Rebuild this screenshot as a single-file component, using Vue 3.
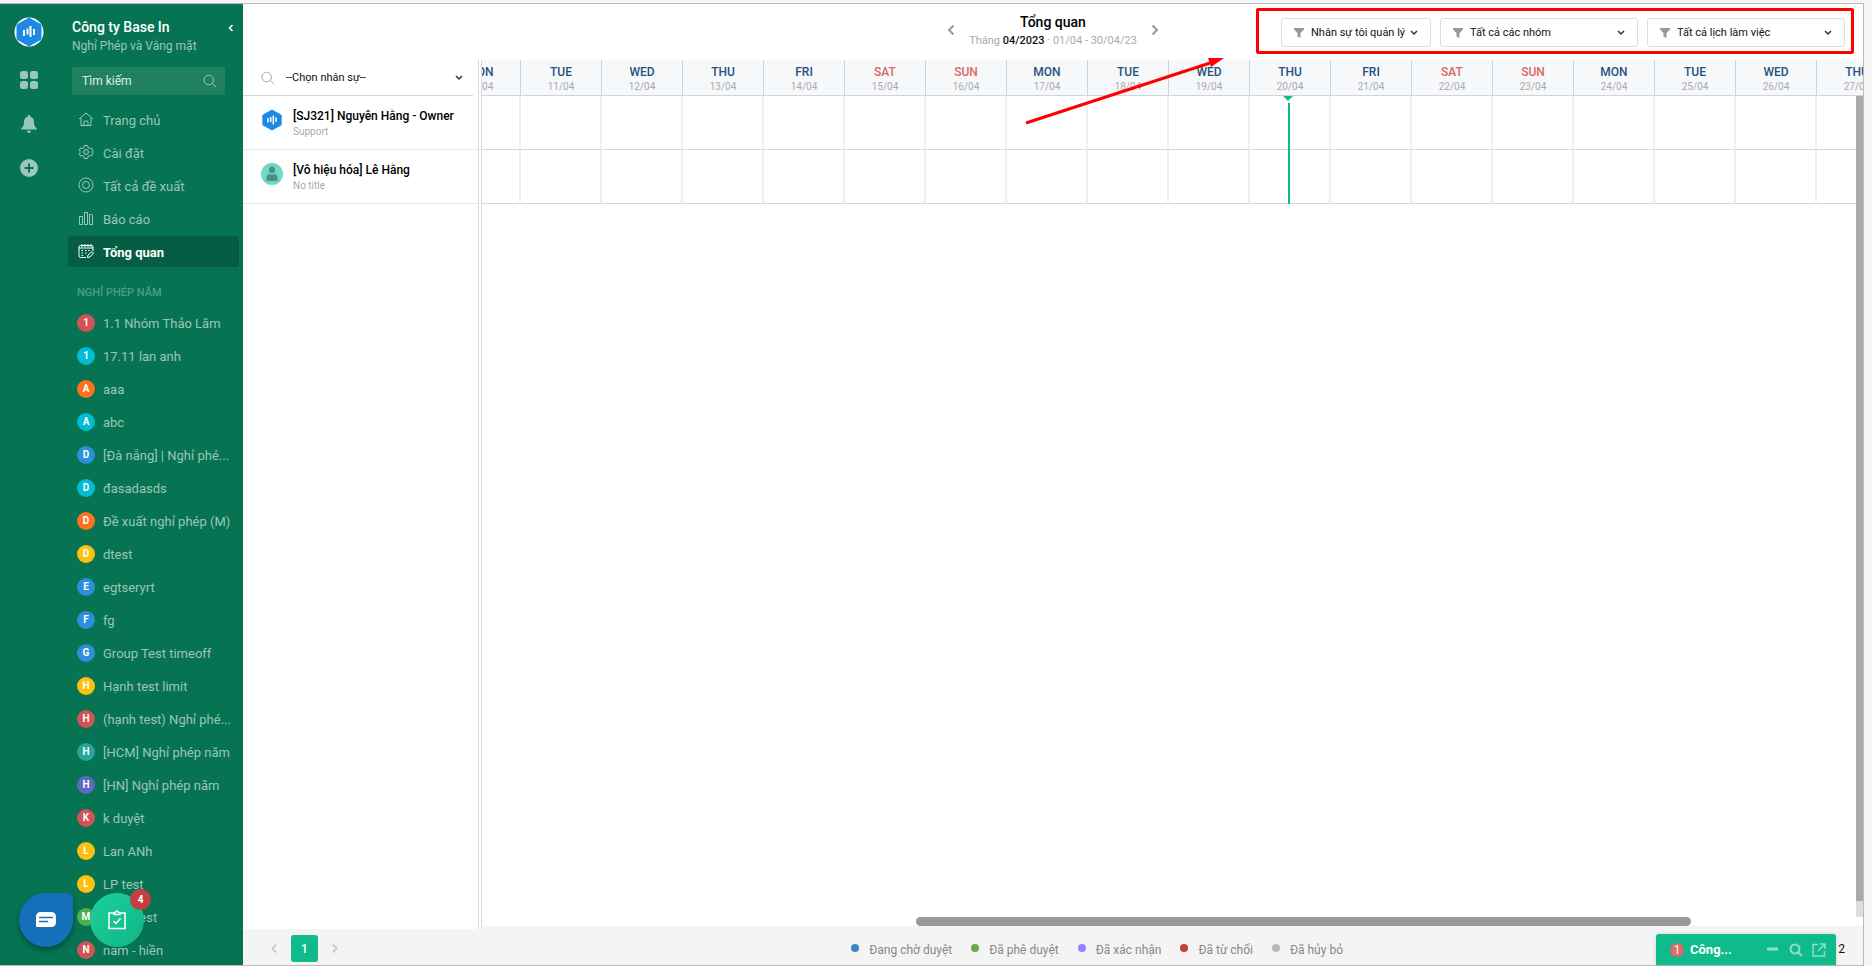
<template>
  <div class="page">
    <div class="frame">
      <aside class="rail">
        <a href="#" class="logo" aria-label="Base">
          <svg width="30" height="30" viewBox="0 0 30 30">
            <circle cx="15" cy="15" r="14.5" fill="#fff" />
            <path d="M15 1 26.5 7.5Q27 8 27 9v12q0 1-.5 1.500L15 29 3.500 22.500Q3 22 3 21V9q0-1 .5-1.500Z" fill="#1e88e5" stroke="#1e88e5" stroke-width="1" />
            <path d="M10 13v6M13.500 11.500v6M16.500 9v11M20 12v6" stroke="#fff" stroke-width="2" />
          </svg>
        </a>
        <button type="button" class="rail-btn" aria-label="Ứng dụng">
          <svg width="18" height="18" viewBox="0 0 18 18">
            <rect width="8" height="8" rx="2.500" />
            <rect x="10" width="8" height="8" rx="2.500" />
            <rect y="10" width="8" height="8" rx="2.500" />
            <rect x="10" y="10" width="8" height="8" rx="2.500" />
          </svg>
        </button>
        <button type="button" class="rail-btn" aria-label="Thông báo">
          <svg width="18" height="18" viewBox="0 0 18 18">
            <path d="M9 0c.8 0 1.300.5 1.300 1.300v.5C13 2.500 14 4.700 14 7c0 3.500 1 4.800 2.800 6.200v1.300H1.200v-1.300C3 11.800 4 10.500 4 7c0-2.300 1-4.500 3.700-5.200v-.5C7.700.5 8.200 0 9 0ZM7 15.700h4C11 17 10 18 9 18s-2-1-2-2.300Z" />
          </svg>
        </button>
        <button type="button" class="rail-btn" aria-label="Tạo mới">
          <svg width="18" height="18" viewBox="0 0 18 18">
            <circle cx="9" cy="9" r="9" />
            <path d="M9 4.500v9M4.500 9h9" stroke="#067352" stroke-width="2" />
          </svg>
        </button>
      </aside>

      <aside class="sidebar">
        <div class="company">
          <div>
            <div class="company-name">Công ty Base In</div>
            <div class="company-app">Nghỉ Phép và Vắng mặt</div>
          </div>
          <button type="button" class="collapse" aria-label="Thu gọn">
            <svg width="6" height="8" viewBox="0 0 6 8"><path d="M4.500 1 1.500 4l3 3" fill="none" stroke="#fff" stroke-width="1.500" /></svg>
          </button>
        </div>

        <div class="search">
          <input type="text" placeholder="Tìm kiếm" aria-label="Tìm kiếm" v-model="keyword" />
          <svg width="14" height="14" viewBox="0 0 14 14"><path d="M10.500 6a4.800 4.800 0 1 1-9.600 0 4.800 4.800 0 0 1 9.600 0ZM9.300 9.300l4 4" /></svg>
        </div>

        <nav class="menu">
          <a v-for="item in menu" :key="item.name" href="#" :class="{ active: item.active }">
            <svg width="16" height="16" viewBox="0 0 16 16"><path :d="item.icon" /></svg>
            <span>{{ item.name }}</span>
          </a>
        </nav>

        <div class="section">NGHỈ PHÉP NĂM</div>
        <nav class="groups">
          <a v-for="group in groups" :key="group.name" href="#">
            <b :class="group.color">{{ group.letter }}</b>
            <span>{{ group.name }}</span>
          </a>
        </nav>
      </aside>

      <main class="main">
        <header class="header">
          <div class="period">
            <button type="button" aria-label="Tháng trước">
              <svg width="8" height="12" viewBox="0 0 8 12"><path d="M6.500 1.500 2 6l4.500 4.500" /></svg>
            </button>
            <div class="period-text">
              <h1>Tổng quan</h1>
              <p>Tháng <b>04/2023</b> · 01/04 - 30/04/23</p>
            </div>
            <button type="button" aria-label="Tháng sau">
              <svg width="8" height="12" viewBox="0 0 8 12"><path d="M1.500 1.500 6 6l-4.500 4.500" /></svg>
            </button>
          </div>
          <div class="filters">
            <div v-for="filter in filters" :key="filter" class="filter">
              <svg class="funnel" width="10" height="10" viewBox="0 0 10 10"><path d="M0 0h10v1.500L6.500 5v5l-3-1.500V5L0 1.500Z" /></svg>
              <select :aria-label="filter">
                <option>{{ filter }}</option>
              </select>
              <svg class="caret" width="8" height="6" viewBox="0 0 8 6"><path d="m1 1 3 3 3-3" /></svg>
            </div>
          </div>
        </header>

        <div class="board">
          <section class="people">
            <div class="picker">
              <svg class="glass" width="14" height="14" viewBox="0 0 14 14"><path d="M10.500 6a4.800 4.800 0 1 1-9.600 0 4.800 4.800 0 0 1 9.600 0ZM9.300 9.300l4 4" /></svg>
              <select aria-label="Chọn nhân sự">
                <option>--Chọn nhân sự--</option>
              </select>
              <svg class="caret" width="8" height="6" viewBox="0 0 8 6"><path d="m1 1 3 3 3-3" /></svg>
            </div>
            <div class="person">
              <svg width="22" height="22" viewBox="0 0 22 22">
                <path d="M11 .5 20 5.500q.7.500.7 1.200v8.600q0 .7-.7 1.200l-9 5-9-5q-.7-.5-.7-1.200V6.700q0-.7.7-1.200Z" fill="#1e88e5" />
                <path d="M7 9v4.500M9.700 8v5M12.300 6.500v9M15 8.500v4.500" stroke="#fff" stroke-width="1.500" />
              </svg>
              <div>
                <div class="person-name">[SJ321] Nguyên Hằng - Owner</div>
                <div class="person-title">Support</div>
              </div>
            </div>
            <div class="person">
              <svg width="22" height="22" viewBox="0 0 22 22">
                <circle cx="11" cy="11" r="11" fill="#70d9c5" />
                <rect x="8" y="3.500" width="6" height="6.500" rx="2.500" fill="#4a9183" />
                <path d="M5.500 16.500v-2c0-2 1.500-3.500 3.500-3.500q2 .8 4 0c2 0 3.500 1.500 3.500 3.500v2q0 1.500-1.500 1.500H7q-1.500 0-1.500-1.500Z" fill="#4a9183" />
              </svg>
              <div>
                <div class="person-name">[Vô hiệu hóa] Lê Hằng</div>
                <div class="person-title">No title</div>
              </div>
            </div>
          </section>

          <section class="timeline">
            <div class="viewport">
              <div class="canvas">
                <table>
                  <thead>
                    <tr>
                      <th v-for="day in days" :key="day.date" :class="{ weekend: day.weekend }">
                        {{ day.name }}<small>{{ day.date }}</small>
                      </th>
                    </tr>
                  </thead>
                  <tbody>
                    <tr v-for="row in 2" :key="row">
                      <td v-for="day in days" :key="day.date"></td>
                    </tr>
                  </tbody>
                </table>
                <div class="now" :style="{ left: nowLeft + 'px' }"></div>
              </div>
              <div class="vbar"><i></i></div>
            </div>
            <div class="hbar"><i></i></div>
          </section>
        </div>

        <footer class="footer">
          <div class="pager">
            <button type="button" aria-label="Trang trước">
              <svg width="6" height="9" viewBox="0 0 6 9"><path d="M5 .5 1.500 4.500 5 8.500" /></svg>
            </button>
            <button type="button" class="current">1</button>
            <button type="button" aria-label="Trang sau">
              <svg width="6" height="9" viewBox="0 0 6 9"><path d="m1 .5 3.500 4L1 8.500" /></svg>
            </button>
          </div>
          <ul class="legend">
            <li v-for="status in statuses" :key="status.name">
              <i :class="status.color"></i>{{ status.name }}
            </li>
          </ul>
          <div class="total">2</div>
        </footer>
      </main>
    </div>

    <!-- nút nổi -->
    <div class="floating">
      <button type="button" class="chat-btn" aria-label="Tin nhắn">
        <svg width="20" height="16" viewBox="0 0 20 16">
          <path d="M5 0h10q5 0 5 5v5q0 5-5 5H1q-1 0-1-1V5q0-5 5-5Z" fill="#fff" />
          <path d="M3 5.500h14M3 9.500h9" stroke="#1470b8" stroke-width="1.500" />
        </svg>
      </button>
      <button type="button" class="task-btn" aria-label="Công việc">
        <svg width="18" height="20" viewBox="0 0 18 20" fill="none" stroke="#fff" stroke-width="1.500">
          <path d="M6 3H1v15.500h16V3h-5M6 4.500V3q0-.5.5-.5h1Q8 1 9 1t1.500 1.500h1q.5 0 .5.500v1.500ZM5.500 11 8 13.500l4.500-5" />
        </svg>
        <span>4</span>
      </button>
    </div>

    <div class="chat">
      <span class="chat-count">1</span>
      <span class="chat-name">Công...</span>
      <button type="button" aria-label="Thu nhỏ">
        <svg width="14" height="14" viewBox="0 0 14 14"><path d="M1 6h11" stroke-width="3" /></svg>
      </button>
      <button type="button" aria-label="Tìm">
        <svg width="14" height="14" viewBox="0 0 14 14"><path d="M10.500 6a4.500 4.500 0 1 1-9 0 4.500 4.500 0 0 1 9 0ZM9 9l4 4" stroke-width="2" /></svg>
      </button>
      <button type="button" aria-label="Mở rộng">
        <svg width="14" height="14" viewBox="0 0 14 14"><path d="M6 1.500H1v11.500h11.500V8M8 1h5v5M13 1 6 8" stroke-width="1.500" /></svg>
      </button>
    </div>

    <div class="mark"></div>
    <svg class="arrow" width="200" height="68" viewBox="0 0 200 68">
      <path d="M2 66 186 6" stroke="#f00" stroke-width="3" />
      <path d="M200 1 184 1l3 9Z" fill="#f00" />
    </svg>
  </div>
</template>

<script setup>
import { ref } from "vue";

const keyword = ref("");

const menu = [
  { name: "Trang chủ", icon: "M1 8 8 2l7 6M3 7v7.500h10V7M6 14.500V11q0-1 1-1h2q1 0 1 1v3.500" },
  {
    name: "Cài đặt",
    icon: "M6.500 1.500h3l.5 2 1.500 1 2-.5 1.500 2.500L13.500 8l1.500 1.500-1.500 2.500-2-.5-1.500 1-.5 2h-3l-.5-2-1.500-1-2 .5L1 9.500 2.500 8 1 6.500 2.500 4l2 .5 1.500-1ZM10.500 8a2.500 2.500 0 1 1-5 0 2.500 2.500 0 0 1 5 0ZM8.500 8h-1",
  },
  { name: "Tất cả đề xuất", icon: "M15 8A7 7 0 1 1 1 8a7 7 0 0 1 14 0ZM11.500 8a3.500 3.500 0 1 1-7 0 3.500 3.500 0 0 1 7 0Z" },
  { name: "Báo cáo", icon: "M1.500 6.500h3v8h-3ZM6.500 2.500h3v12h-3ZM11.500 4.500h2q1 0 1 1v9h-3Z" },
  {
    name: "Tổng quan",
    icon: "M8 14.500H2.500q-1.500 0-1.500-1.500V4q0-1.500 1.500-1.500h11Q15 2.500 15 4v4M1 5h14M4 1v3M7 1v3M10 1v3M13 1v3M3.500 7.500H5M7 7.500h1.500M10 7.500h1.500M3.500 10H5M7 10h1.500M3.500 12.500H5M9.500 14.500l.5-2.500 4-3.500 1.500 1.500-3.500 4Z",
    active: true,
  },
];

const groups = [
  { letter: "1", name: "1.1 Nhóm Thảo Lâm", color: "red" },
  { letter: "1", name: "17.11 lan anh", color: "cyan" },
  { letter: "A", name: "aaa", color: "orange" },
  { letter: "A", name: "abc", color: "cyan" },
  { letter: "D", name: "[Đà nẵng] | Nghỉ phé...", color: "blue" },
  { letter: "D", name: "đasadasds", color: "cyan" },
  { letter: "D", name: "Đề xuất nghỉ phép (M)", color: "orange" },
  { letter: "D", name: "dtest", color: "yellow" },
  { letter: "E", name: "egtseryrt", color: "blue" },
  { letter: "F", name: "fg", color: "blue" },
  { letter: "G", name: "Group Test timeoff", color: "blue" },
  { letter: "H", name: "Hạnh test limit", color: "yellow" },
  { letter: "H", name: "(hạnh test) Nghỉ phé...", color: "red" },
  { letter: "H", name: "[HCM] Nghỉ phép năm", color: "teal" },
  { letter: "H", name: "[HN] Nghỉ phép năm", color: "purple" },
  { letter: "K", name: "k duyệt", color: "red" },
  { letter: "L", name: "Lan ANh", color: "yellow" },
  { letter: "L", name: "LP test", color: "yellow" },
  { letter: "M", name: "Minh test", color: "green" },
  { letter: "N", name: "nam - hiền", color: "red" },
];

const filters = ["Nhân sự tôi quản lý", "Tất cả các nhóm", "Tất cả lịch làm việc"];

const weekdays = ["SUN", "MON", "TUE", "WED", "THU", "FRI", "SAT"];

// Từ 10/04 đến 27/04, ngày 10/04 là thứ hai
const days = Array.from({ length: 18 }, (_, i) => {
  const weekday = (i + 1) % 7;
  return {
    name: weekdays[weekday],
    date: `${10 + i}/04`,
    weekend: weekday === 0 || weekday === 6,
  };
});

// Vị trí hiện tại: gần giữa ngày 20/04
const dayWidth = 81;
const nowLeft = dayWidth * 10 + 38;

const statuses = [
  { name: "Đang chờ duyệt", color: "pending" },
  { name: "Đã phê duyệt", color: "approved" },
  { name: "Đã xác nhận", color: "confirmed" },
  { name: "Đã từ chối", color: "rejected" },
  { name: "Đã hủy bỏ", color: "cancelled" },
];
</script>

<style>
body {
  margin: 0;
}
</style>

<style scoped>
* {
  box-sizing: border-box;
}
.page {
  position: relative;
  height: 100vh;
  padding: 3px 8px 0 0;
  overflow: hidden;
  background: #f6f6f6;
  font-family: Roboto, "Liberation Sans", sans-serif;
  font-size: 12px;
  color: #111;
}
button {
  display: flex;
  align-items: center;
  justify-content: center;
  padding: 0;
  border: none;
  background: none;
  font-family: inherit;
  cursor: pointer;
}
a {
  color: inherit;
  text-decoration: none;
}
select {
  appearance: none;
  flex: 1;
  min-width: 0;
  height: 100%;
  padding: 0;
  border: none;
  outline: none;
  background: transparent;
  color: #111;
  font-family: inherit;
  font-size: 11px;
}
.frame {
  display: flex;
  height: 100%;
  border: 1px solid #bbb;
  border-left: none;
  background: #fff;
}

/* sidebar */
.rail {
  display: flex;
  flex-direction: column;
  align-items: center;
  gap: 26px;
  width: 58px;
  padding-top: 13px;
  background: #067352;
}
.logo {
  height: 28px;
}
.rail-btn {
  fill: #9bc7ba;
}
.sidebar {
  display: flex;
  flex-direction: column;
  width: 185px;
  padding: 12px 4px 0 10px;
  overflow: hidden;
  background: #067352;
  color: rgba(255, 255, 255, 0.6);
}
.company {
  display: flex;
  justify-content: space-between;
  align-items: flex-start;
  padding-left: 4px;
}
.company-name {
  color: #fff;
  font-size: 14px;
  font-weight: 500;
  line-height: 22px;
}
.company-app {
  line-height: 16px;
  white-space: nowrap;
}
.collapse {
  width: 16px;
  height: 24px;
}
.search {
  display: flex;
  align-items: center;
  flex-shrink: 0;
  height: 28px;
  margin: 13px 14px 9px 4px;
  padding: 0 8px 0 10px;
  border-radius: 2px;
  background: #208161;
}
.search input {
  flex: 1;
  min-width: 0;
  padding: 0;
  border: none;
  outline: none;
  background: none;
  color: #fff;
  font-family: inherit;
  font-size: 12px;
}
.search input::placeholder {
  color: #e0eeea;
}
.search svg {
  fill: none;
  stroke: #9bc7ba;
}
.menu a,
.groups a {
  display: flex;
  align-items: center;
  height: 31px;
  margin-bottom: 2px;
  font-size: 13px;
}
.menu span,
.groups span {
  padding-top: 2px;
  white-space: nowrap;
}
.menu a {
  gap: 9px;
  padding-left: 10px;
}
.menu svg {
  margin-bottom: 2px;
  fill: none;
  stroke: rgba(255, 255, 255, 0.6);
}
.menu a.active {
  border-radius: 2px;
  background: #055e43;
  color: #fff;
  font-weight: 700;
}
.menu a.active svg {
  stroke: #fff;
}
.section {
  margin-top: 16px;
  padding-left: 9px;
  color: rgba(255, 255, 255, 0.3);
  font-size: 11px;
  font-weight: 500;
  line-height: 16px;
}
.groups {
  padding-top: 6px;
}
.groups a {
  gap: 8px;
  padding-left: 9px;
}
.groups b {
  flex-shrink: 0;
  width: 18px;
  border-radius: 50%;
  color: #fff;
  font-size: 10px;
  line-height: 18px;
  text-align: center;
}
.red {
  background: #d05454;
}
.cyan {
  background: #00bcd4;
}
.orange {
  background: #ff7020;
}
.blue {
  background: #2b90d9;
}
.yellow {
  background: #fdc00f;
}
.teal {
  background: #26a69a;
}
.purple {
  background: #5c6bc0;
}
.green {
  background: #4caf50;
}

/* header */
.main {
  display: flex;
  flex: 1;
  flex-direction: column;
  min-width: 0;
}
.header {
  display: grid;
  grid-template-columns: 1fr auto 1fr;
  align-items: start;
  height: 56px;
}
.period {
  display: flex;
  grid-column: 2;
  align-items: center;
  justify-content: space-between;
  width: 212px;
  padding-top: 7px;
}
.period svg {
  fill: none;
  stroke: #999;
  stroke-width: 2;
}
.period-text {
  text-align: center;
}
.period h1 {
  margin: 0;
  color: #000;
  font-size: 14px;
  font-weight: 500;
  line-height: 22px;
}
.period p {
  margin: 0;
  color: #aaa;
  font-size: 11px;
  line-height: 16px;
}
.period p b {
  color: #111;
  font-weight: 500;
}
.filters {
  display: flex;
  justify-content: flex-end;
  gap: 9px;
  padding: 14px 18px 0 0;
}
.filter {
  display: flex;
  align-items: center;
  width: 198px;
  height: 29px;
  padding: 0 12px;
  border: 1px solid #ddd;
  border-radius: 3px;
}
.filter:first-child {
  width: 150px;
}
.funnel {
  margin-right: 7px;
  fill: #999;
}
.caret {
  fill: none;
  stroke: #333;
  stroke-width: 1.500;
}

/* board */
.board {
  display: flex;
  flex: 1;
  gap: 2px;
  min-height: 0;
}
.people {
  width: 236px;
  border-right: 1px solid #d8d8d8;
}
.picker {
  display: flex;
  align-items: center;
  height: 36px;
  margin-right: 5px;
  padding: 0 10px 0 18px;
  border-bottom: 1px solid #d4d4d4;
}
.glass {
  margin-right: 11px;
  fill: none;
  stroke: #aaa;
}
.person {
  display: flex;
  align-items: flex-start;
  gap: 10px;
  height: 54px;
  padding: 13px 18px 0;
  border-bottom: 1px solid #e8e8e8;
}
.person-name {
  color: #000;
  font-weight: 500;
  line-height: 14px;
  white-space: nowrap;
}
.person-title {
  margin-top: 2px;
  color: #aaa;
  font-size: 10px;
  line-height: 14px;
}
.timeline {
  display: flex;
  flex: 1;
  flex-direction: column;
  min-width: 0;
  border-left: 1px solid #d8d8d8;
}
.viewport {
  position: relative;
  flex: 1;
  overflow: hidden;
}
.canvas {
  position: relative;
  width: 1458px;
  margin-left: -42px;
}
table {
  width: 100%;
  border-spacing: 0;
  table-layout: fixed;
}
th {
  height: 36px;
  padding: 2px 0 0;
  border-right: 1px solid #c9d5e4;
  border-bottom: 1px solid #c9d5e4;
  background: #f6f8fa;
  color: #25527f;
  font-size: 12px;
  font-weight: 500;
  line-height: 16px;
}
th small {
  display: block;
  color: #aaa;
  font-size: 10px;
  font-weight: 400;
  line-height: 14px;
}
th.weekend {
  color: #dc6565;
}
td {
  height: 54px;
  padding: 0;
  border-right: 2px solid #f0f0f0;
  border-bottom: 1px solid #d8d8d8;
}
.now {
  position: absolute;
  top: 43px;
  bottom: 0;
  width: 2px;
  background: #0fbb8a;
}
.now::before {
  content: "";
  position: absolute;
  top: -7px;
  left: -5px;
  border: 5px solid transparent;
  border-top-color: #0fbb8a;
  border-bottom: none;
}
.vbar {
  position: absolute;
  top: 36px;
  right: 0;
  bottom: 0;
  width: 7px;
  background: #ddd;
}
.vbar i {
  display: block;
  height: 98%;
  background: #aaa;
}
.hbar {
  height: 12px;
  padding-right: 9px;
  border-bottom: 3px solid #f4f4f4;
}
.hbar i {
  display: block;
  width: 56.5%;
  height: 9px;
  margin-left: 31.6%;
  border-radius: 5px;
  background: #999;
}

/* footer */
.footer {
  display: flex;
  align-items: center;
  justify-content: space-between;
  height: 36px;
  padding: 3px 18px 0 28px;
  background: #f4f4f4;
}
.pager {
  display: flex;
  gap: 14px;
  padding-right: 18px;
}
.pager svg {
  fill: none;
  stroke: #ccc;
  stroke-width: 2;
}
.pager .current {
  width: 27px;
  height: 27px;
  border-radius: 3px;
  background: #0fbb8a;
  color: #fff;
  font-size: 12px;
  font-weight: 500;
}
.legend {
  display: flex;
  gap: 19px;
  margin: 0;
  padding: 2px 0 0;
  color: #888;
  list-style: none;
}
.legend li {
  display: flex;
  align-items: center;
  gap: 10px;
}
.legend i {
  width: 8px;
  height: 8px;
  margin-bottom: 4px;
  border-radius: 50%;
}
.pending {
  background: #3d85c6;
}
.approved {
  background: #6aa84f;
}
.confirmed {
  background: #9980ff;
}
.rejected {
  background: #c44040;
}
.cancelled {
  background: #b7b7b7;
}

/* overlays */
.floating {
  position: absolute;
  bottom: 19px;
  left: 19px;
  display: flex;
  gap: 17px;
}
.chat-btn,
.task-btn {
  position: relative;
  width: 54px;
  height: 54px;
  border-radius: 50%;
}
.chat-btn {
  border-top-right-radius: 6px;
  background: #1470b8;
  box-shadow: 0 3px 5px rgba(0, 0, 0, 0.35);
}
.task-btn {
  background: linear-gradient(135deg, #1cd09c, #10b586);
}
.task-btn span {
  position: absolute;
  top: -4px;
  right: -7px;
  width: 21px;
  border-radius: 50%;
  background: #c44040;
  color: #fff;
  font-size: 10px;
  font-weight: 700;
  line-height: 21px;
}
.chat {
  position: absolute;
  right: 36px;
  bottom: 1px;
  display: flex;
  align-items: center;
  gap: 9px;
  width: 180px;
  height: 31px;
  padding: 0 10px 0 14px;
  border-radius: 3px 3px 0 0;
  background: #0fbb8a;
  box-shadow: 0 0 4px rgba(0, 0, 0, 0.15);
  color: #fff;
}
.chat-count {
  width: 14px;
  border-radius: 50%;
  background: #dc6b6b;
  line-height: 14px;
  text-align: center;
}
.chat-name {
  flex: 1;
  margin-left: -3px;
  font-size: 13px;
  font-weight: 700;
}
.chat svg {
  fill: none;
  stroke: #8be0c6;
}
.mark {
  position: absolute;
  top: 8px;
  right: 18px;
  width: 598px;
  height: 46px;
  border: 3px solid #f00;
  border-radius: 2px;
  pointer-events: none;
}
.arrow {
  position: absolute;
  top: 57px;
  right: 648px;
  fill: none;
  pointer-events: none;
}
</style>
